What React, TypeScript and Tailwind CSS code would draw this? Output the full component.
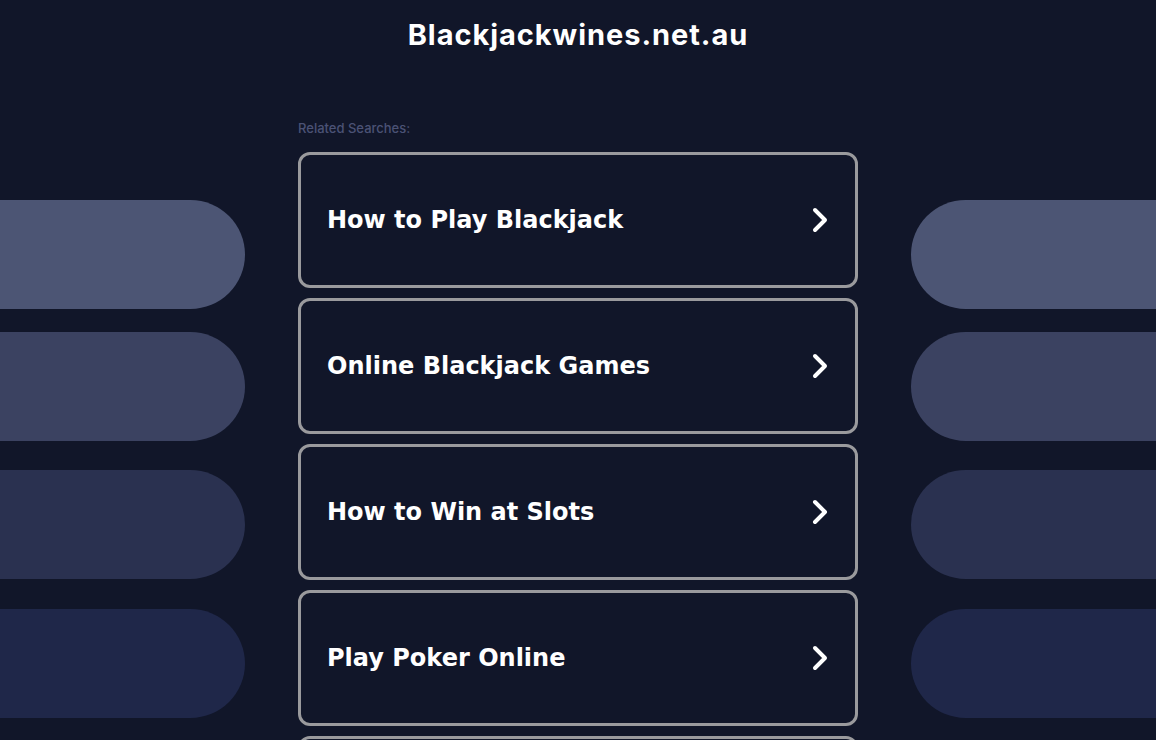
import React from 'react';

const searches = [
  'How to Play Blackjack',
  'Online Blackjack Games',
  'How to Win at Slots',
  'Play Poker Online',
  'Casino Bonus Offers',
];

const pills = [
  { color: 'bg-[#4c5574]', margin: 'mt-[200px]' },
  { color: 'bg-[#3b4261]', margin: 'mt-[23px]' },
  { color: 'bg-[#2a3150]', margin: 'mt-[29px]' },
  { color: 'bg-[#1f2749]', margin: 'mt-[30px]' },
];

const Chevron = () => (
  <svg width="16" height="26" viewBox="0 0 16 26" fill="none" className="shrink-0">
    <polyline
      points="3,3 13,13 3,23"
      stroke="#ffffff"
      strokeWidth="4"
      strokeLinecap="round"
      strokeLinejoin="round"
    />
  </svg>
);

const PillColumn: React.FC<{ side: 'left' | 'right' }> = ({ side }) => (
  <div className="flex flex-col w-[245px] shrink-0">
    {pills.map((p, i) => (
      <div
        key={i}
        className={`h-[109px] ${p.color} ${p.margin} ${side === 'left' ? 'rounded-r-full' : 'rounded-l-full'}`}
      />
    ))}
  </div>
);

export default function App() {
  return (
    <div className="w-full h-[740px] overflow-hidden bg-[#111629] flex justify-between">
      <PillColumn side="left" />

      <div className="w-[560px] shrink-0 flex flex-col">
        <h1
          className="mt-[17px] text-center text-white font-bold text-[29px] leading-[36px] tracking-[0.95px]"
          style={{ fontFamily: 'Inter, "Open Sans", sans-serif' }}
        >
          Blackjackwines.net.au
        </h1>

        <p
          className="mt-[66px] text-[13px] leading-[18px] font-medium text-[#4b5275]"
          style={{ fontFamily: 'Inter, "Open Sans", sans-serif' }}
        >
          Related Searches:
        </p>

        <div className="mt-[15px] flex flex-col gap-[10px]">
          {searches.map((s) => (
            <a
              key={s}
              href="#"
              className="h-[136px] shrink-0 flex items-center justify-between pl-[26px] pr-[27px] border-[3px] border-[#9a9a9d] rounded-[12px] text-white font-bold text-[24px]"
              style={{ fontFamily: '"DejaVu Sans", Verdana, sans-serif' }}
            >
              <span>{s}</span>
              <Chevron />
            </a>
          ))}
        </div>
      </div>

      <PillColumn side="right" />
    </div>
  );
}
